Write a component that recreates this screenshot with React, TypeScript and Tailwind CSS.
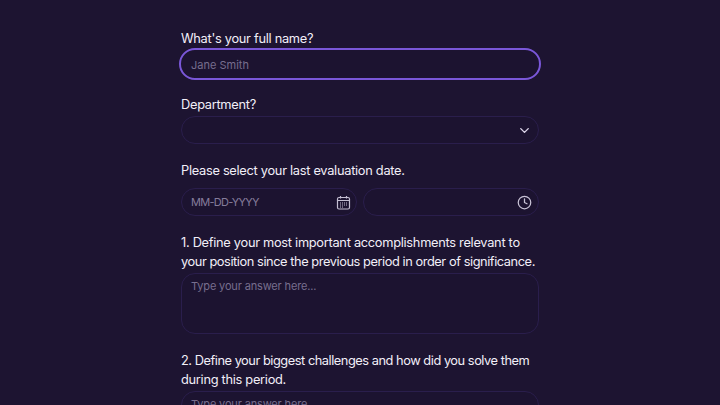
import { ChevronDown, Clock } from 'lucide-react'

const labelClass = 'text-[12.8px] leading-[19px] tracking-[-0.28px] text-[#f2eff8] whitespace-nowrap'
const fieldClass =
  'flex items-center justify-between h-7 rounded-full border border-[#2a1e4c] bg-[#1c1330] pl-[9px]'
const areaClass =
  'rounded-[14px] border border-[#2a1e4c] bg-[#1c1330] px-[9px] pt-[4px] text-[11px] leading-4 tracking-[-0.15px] text-[#776e8e]'

function CalendarIcon() {
  return (
    <svg width="15" height="15" viewBox="0 0 15 15" fill="none" className="text-[#c4bed2]">
      <rect x="1.5" y="2.5" width="12" height="11.5" rx="1.5" stroke="currentColor" strokeWidth="1.2" />
      <path d="M1.5 5.5h12M4.5 1v2.5M10.5 1v2.5" stroke="currentColor" strokeWidth="1.2" />
      <path d="M4 8h7M4 10h7M4 12h4" stroke="currentColor" strokeWidth="1" strokeDasharray="1 1" />
    </svg>
  )
}

export default function App() {
  return (
    <div
      className="h-[405px] overflow-hidden bg-[#1d1431]"
      style={{ fontFamily: 'Inter, sans-serif' }}
    >
      <div className="w-[358px] mx-auto pt-[28.5px] flex flex-col">
        {/* Name */}
        <div className={labelClass}>What's your full name?</div>
        <div className="mt-[2.5px] flex items-center h-7 rounded-full bg-[#1c1330] pl-[10px] pt-[2px] outline-2 outline-[#7a57d8] text-[11px] text-[#776e8e]">
          Jane Smith
        </div>

        {/* Department */}
        <div className={`${labelClass} mt-[16.5px]`}>Department?</div>
        <div className={`${fieldClass} mt-[2.5px] pr-[6px]`}>
          <span />
          <ChevronDown className="w-[15px] h-[15px] text-[#ddd6ea]" strokeWidth={2.25} />
        </div>

        {/* Date */}
        <div className={`${labelClass} mt-[16.5px]`}>Please select your last evaluation date.</div>
        <div className="mt-[8.5px] flex gap-[6px]">
          <div className={`${fieldClass} w-[176px] pr-[5px] text-[11px] tracking-[-0.7px] text-[#857c9b]`}>
            <span>MM-DD-YYYY</span>
            <CalendarIcon />
          </div>
          <div className={`${fieldClass} flex-1 pr-[6px]`}>
            <span />
            <Clock className="w-[15px] h-[15px] text-[#c9c3d6]" strokeWidth={2} />
          </div>
        </div>

        {/* Accomplishments */}
        <div className={`${labelClass} mt-[16.5px]`}>
          1. Define your most important accomplishments relevant to
          <br />
          <span className="tracking-[-0.43px]">your position since the previous period in order of significance.</span>
        </div>
        <div className={`${areaClass} mt-[2.5px] h-[61px]`}>Type your answer here...</div>

        {/* Challenges */}
        <div className={`${labelClass} mt-[16.5px]`}>
          <span className="tracking-[-0.46px]">2. Define your biggest challenges and how did you solve them</span>
          <br />
          during this period.
        </div>
        <div className={`${areaClass} mt-[2.5px] h-[61px]`}>Type your answer here...</div>
      </div>
    </div>
  )
}
